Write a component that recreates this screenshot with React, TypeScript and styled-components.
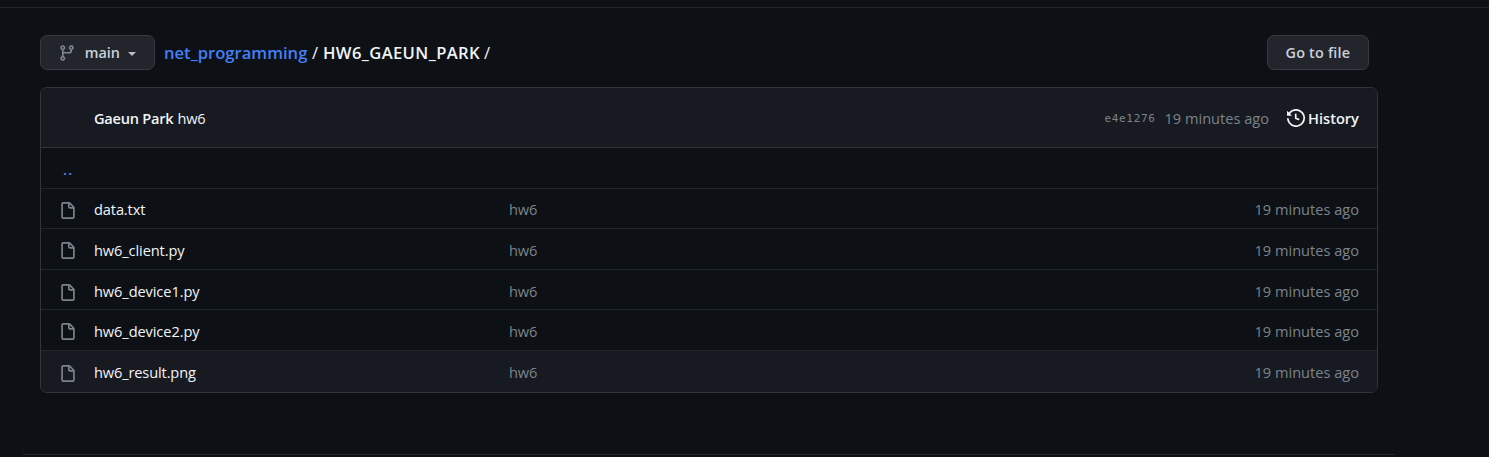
import React from "react";
import styled, { createGlobalStyle } from "styled-components";

const GlobalStyle = createGlobalStyle`
  * { box-sizing: border-box; }
  body {
    margin: 0;
    height: 457px;
    overflow: hidden;
    background: #0d1115;
    color: #f1f4f8;
    font-family: "Open Sans", "Noto Sans", sans-serif;
    font-size: 14.6px;
    line-height: 24px;
    white-space: nowrap;
  }
`;

const Page = styled.div`
  height: 457px;
  padding-top: 7px;
  display: flex;
  flex-direction: column;
`;
const TopRule = styled.div`
  height: 1px;
  flex: none;
  background: #21262c;
`;
const Content = styled.main`
  width: 1338px;
  margin: 27px 0 0 40px;
`;
const Toolbar = styled.div`
  display: flex;
  align-items: center;
  height: 35px;
  margin-bottom: 17px;
  padding-right: 9px;
`;
const Button = styled.button<{ $width: number }>`
  width: ${(p) => p.$width}px;
  height: 35px;
  padding: 0 17.5px;
  display: flex;
  align-items: center;
  background: #22252c;
  border: 1px solid #363a40;
  border-radius: 7px;
  color: #c9d1d9;
  font: 600 14.4px/24px "Open Sans", "Noto Sans", sans-serif;
`;
const Caret = styled.span`
  margin: 2px 0 0 8px;
  border: 4.5px solid transparent;
  border-top-color: #b4bbc2;
  border-bottom: 0;
`;
const Label = styled.span<{ $track?: number }>`
  letter-spacing: ${(p) => p.$track ?? 0}px;
`;
const Breadcrumb = styled.nav`
  display: flex;
  flex: 1;
  margin-left: 9px;
  font-size: 16.6px;
  font-weight: 600;
`;
const Crumb = styled.a<{ $width: number; $track: number }>`
  width: ${(p) => p.$width}px;
  letter-spacing: ${(p) => p.$track}px;
  color: #447ff5;
`;
const Current = styled(Crumb)`
  color: #f1f4f8;
`;
const Separator = styled.span<{ $width: number }>`
  width: ${(p) => p.$width}px;
  font-weight: 400;
`;
const Box = styled.section`
  height: 306px;
  border: 1px solid #30343b;
  border-radius: 7px;
  overflow: hidden;
`;
const CommitBar = styled.header`
  display: flex;
  align-items: center;
  height: 60px;
  padding: 0 18px 0 53px;
  background: #171a21;
  border-bottom: 1px solid #30343b;
`;
const Author = styled.strong`
  font-weight: 600;
  letter-spacing: -0.25px;
  margin-right: 4px;
`;
const Hash = styled.code`
  margin-left: auto;
  margin-right: 9px;
  padding-top: 3px;
  color: #7b838c;
  font: 11px/22px "DejaVu Sans Mono", monospace;
  letter-spacing: 0.65px;
`;
const Time = styled.span`
  color: #7b838c;
`;
const History = styled.a`
  display: flex;
  align-items: center;
  width: 73px;
  gap: 4px;
  margin-left: 17px;
  font-weight: 600;
`;
const Rows = styled.div`
  display: grid;
  grid-template-rows: 40px 40px 41px 40px 41px 42px;
`;
const Row = styled.div<{ $active?: boolean; $first?: boolean; $top?: number }>`
  display: grid;
  grid-template-columns: 35px 415px 1fr auto;
  align-items: center;
  padding: ${(p) => p.$top ?? 1}px 18px 0;
  background: ${(p) => (p.$active ? "#171a21" : "transparent")};
  border-top: ${(p) => (p.$first ? "0" : "1px solid #21262c")};
`;
const Parent = styled.a`
  padding-left: 4px;
  color: #447ff5;
  font-weight: 600;
  letter-spacing: 1.2px;
`;
const Muted = styled.span`
  color: #7b838c;
  letter-spacing: -0.1px;
`;
const Icon = styled.svg<{ $tone?: string }>`
  width: 18px;
  height: 18px;
  flex: none;
  fill: ${(p) => p.$tone ?? "#7b838c"};
`;
const FileIcon = styled(Icon)`
  margin: 3px 0 0 -0.25px;
`;
const BranchIcon = styled(Icon)`
  margin: 0 8.5px 0 -0.25px;
`;
const HistoryIcon = styled(Icon)`
  margin: 1px -0.5px 0 0.5px;
`;
const BottomRule = styled.div`
  width: 1372px;
  height: 1px;
  flex: none;
  margin: 61px 0 0 23px;
  background: #21262c;
`;

const files = [
  { name: "data.txt", track: -0.12 },
  { name: "hw6_client.py", track: -0.1 },
  { name: "hw6_device1.py", track: -0.09, top: 3 },
  { name: "hw6_device2.py", track: -0.09 },
  { name: "hw6_result.png", track: -0.13, active: true },
];

export default function App() {
  return (
    <Page>
      <GlobalStyle />
      <TopRule />
      <Content>
        <Toolbar>
          <Button $width={115}>
            <BranchIcon viewBox="0 0 16 16">
              <path fillRule="evenodd" d="M11.75 2.5a.75.75 0 100 1.5.75.75 0 000-1.5zm-2.25.75a2.25 2.25 0 113 2.122V6A2.5 2.5 0 0110 8.5H6a1 1 0 00-1 1v1.128a2.251 2.251 0 11-1.5 0V5.372a2.25 2.25 0 111.5 0v1.836A2.492 2.492 0 016 7h4a1 1 0 001-1v-.628A2.25 2.25 0 019.5 3.25zM4.25 12a.75.75 0 100 1.5.75.75 0 000-1.5zM3.5 3.25a.75.75 0 111.5 0 .75.75 0 01-1.5 0z" />
            </BranchIcon>
            <Label>main</Label>
            <Caret />
          </Button>
          <Breadcrumb>
            <Crumb $width={148} $track={0}>net_programming</Crumb>
            <Separator $width={11}>/</Separator>
            <Current $width={161} $track={0.38}>HW6_GAEUN_PARK</Current>
            <Separator $width={11}>/</Separator>
          </Breadcrumb>
          <Button $width={102}>
            <Label $track={0.2}>Go to file</Label>
          </Button>
        </Toolbar>
        <Box>
          <CommitBar>
            <Author>Gaeun Park</Author>
            <Label $track={-0.2}>hw6</Label>
            <Hash>e4e1276</Hash>
            <Time>19 minutes ago</Time>
            <History>
              <HistoryIcon viewBox="0 0 16 16" $tone="#f1f4f8">
                <path fillRule="evenodd" d="M1.643 3.143L.427 1.927A.25.25 0 000 2.104V5.75c0 .138.112.25.25.25h3.646a.25.25 0 00.177-.427L2.715 4.215a6.5 6.5 0 11-1.18 4.458.75.75 0 10-1.493.154 8.001 8.001 0 101.6-5.684zM7.75 4a.75.75 0 01.75.75v2.992l2.028.812a.75.75 0 01-.557 1.392l-2.5-1A.75.75 0 017 8.25v-3.5A.75.75 0 017.75 4z" />
              </HistoryIcon>
              <Label>History</Label>
            </History>
          </CommitBar>
          <Rows>
            <Row $first>
              <Parent>..</Parent>
            </Row>
            {files.map((f) => (
              <Row key={f.name} $active={f.active} $top={f.top}>
                <FileIcon viewBox="0 0 16 16">
                  <path fillRule="evenodd" d="M3.75 1.5a.25.25 0 00-.25.25v11.5c0 .138.112.25.25.25h8.5a.25.25 0 00.25-.25V6H9.75A1.75 1.75 0 018 4.25V1.5H3.75zm5.75.56v2.19c0 .138.112.25.25.25h2.19L9.5 2.06zM2 1.75C2 .784 2.784 0 3.75 0h5.086c.464 0 .909.184 1.237.513l3.414 3.414c.329.328.513.773.513 1.237v8.086A1.75 1.75 0 0112.25 15h-8.5A1.75 1.75 0 012 13.25V1.75z" />
                </FileIcon>
                <Label $track={f.track}>{f.name}</Label>
                <Muted>hw6</Muted>
                <Time>19 minutes ago</Time>
              </Row>
            ))}
          </Rows>
        </Box>
      </Content>
      <BottomRule />
    </Page>
  );
}
